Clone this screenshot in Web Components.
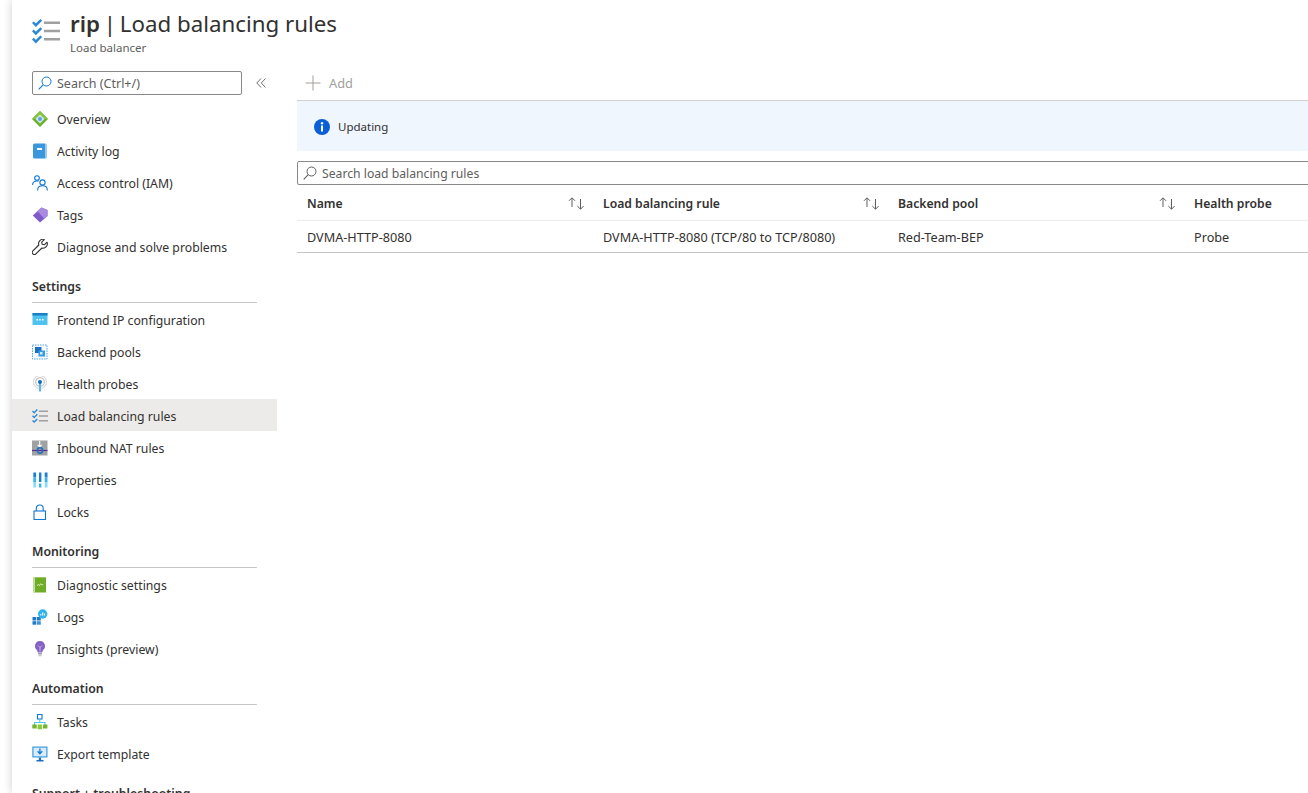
<!DOCTYPE html>
<html>
<head>
<meta charset="utf-8">
<title>rip | Load balancing rules</title>
<style>
  html, body { margin: 0; padding: 0; height: 100%; background: #fff; overflow: hidden; }
  body { font-family: "Noto Sans", "Open Sans", sans-serif; color: #323130; }
</style>
</head>
<body>
<az-blade>
  <az-header slot="header" name="rip" title-text="Load balancing rules" subtitle="Load balancer"></az-header>
  <az-menu slot="menu">
    <az-menu-item icon="overview">Overview</az-menu-item>
    <az-menu-item icon="activity">Activity log</az-menu-item>
    <az-menu-item icon="iam">Access control (IAM)</az-menu-item>
    <az-menu-item icon="tags">Tags</az-menu-item>
    <az-menu-item icon="wrench">Diagnose and solve problems</az-menu-item>
    <az-menu-section>Settings</az-menu-section>
    <az-menu-item icon="frontend">Frontend IP configuration</az-menu-item>
    <az-menu-item icon="backend">Backend pools</az-menu-item>
    <az-menu-item icon="probe">Health probes</az-menu-item>
    <az-menu-item icon="rules" selected>Load balancing rules</az-menu-item>
    <az-menu-item icon="nat">Inbound NAT rules</az-menu-item>
    <az-menu-item icon="props">Properties</az-menu-item>
    <az-menu-item icon="lock">Locks</az-menu-item>
    <az-menu-section>Monitoring</az-menu-section>
    <az-menu-item icon="diag">Diagnostic settings</az-menu-item>
    <az-menu-item icon="logs">Logs</az-menu-item>
    <az-menu-item icon="bulb">Insights (preview)</az-menu-item>
    <az-menu-section>Automation</az-menu-section>
    <az-menu-item icon="tasks">Tasks</az-menu-item>
    <az-menu-item icon="export">Export template</az-menu-item>
    <az-menu-section>Support + troubleshooting</az-menu-section>
  </az-menu>
  <az-content slot="content"></az-content>
</az-blade>

<script>
const ICONS = {
  overview: `<path d="M8 0l8 8-8 8-8-8z" fill="#6bb024"/><path d="M8 0l8 8H0z" fill="#86c43a"/><path d="M8 3.500l4.500 4.500L8 12.500 3.500 8z" fill="#cfe6f5"/><circle cx="8" cy="8" r="2" fill="#5ea0e6"/>`,
  activity: `<rect x="1" y="0.500" width="13.500" height="15" rx="1.500" fill="#3a96dd"/><rect x="13" y="1" width="1.500" height="14" fill="#9cc9ec"/><rect x="5" y="5" width="5" height="2" fill="#fff"/>`,
  iam: `<g fill="none" stroke="#0f78d4" stroke-width="1.100"><circle cx="5" cy="3" r="2.300"/><path d="M.6 10c0-2.500 1.800-4 4.200-4 .6 0 1.200.1 1.700.3"/><circle cx="10.500" cy="7.500" r="2.600"/><path d="M5.600 15.500c0-3 2-4.700 4.900-4.700s4.900 1.700 4.900 4.700"/></g>`,
  tags: `<path d="M9.500.5l6 2.500v6L8 15.500.8 8.500z" fill="#7f5bc9"/><path d="M9.500.5l6 2.500v6l-3.200 2.800-7-7.700z" fill="#a98ae0"/>`,
  wrench: `<path d="M15 3.200l-2.600 2.600-2.200-.5-.5-2.200L12.300.6a4.300 4.300 0 0 0-5.500 5.400L.9 11.900a2.100 2.100 0 0 0 3 3L9.900 9a4.300 4.300 0 0 0 5.100-5.800z" fill="none" stroke="#323130" stroke-width="1.100" stroke-linejoin="round"/>`,
  frontend: `<rect x="0.500" y="1" width="15" height="12" fill="#4fc3ef"/><rect x="0.500" y="1" width="15" height="2.500" fill="#1b7fc4"/><rect x="4.500" y="7" width="1.500" height="1.500" fill="#fff"/><rect x="7.200" y="7" width="1.500" height="1.500" fill="#fff"/><rect x="10" y="7" width="1.500" height="1.500" fill="#fff"/>`,
  backend: `<rect x="0.500" y="1" width="14.500" height="14" fill="#f4f9fd" stroke="#5aa7e0" stroke-dasharray="1.500 1"/><rect x="3" y="3" width="6.500" height="6" fill="#1b6fc2"/><rect x="6.500" y="6.500" width="6.500" height="6" fill="#3a9ce0"/><rect x="8" y="8" width="2.500" height="2.500" fill="#d7ecfa"/>`,
  probe: `<circle cx="8" cy="6" r="6.500" fill="none" stroke="#d8d8d8" stroke-width="1.100"/><circle cx="8" cy="6" r="4.300" fill="none" stroke="#bdbdbd" stroke-width="1.100"/><rect x="7" y="6" width="2" height="9.500" fill="#5cb8ea"/><circle cx="8" cy="6" r="2" fill="#0f6cbd"/>`,
  rules: `<g fill="none"><path d="M.5 3l1.700 1.700 3.100-3.100M.5 7.700l1.700 1.700 3.100-3.100M.5 12.400l1.700 1.700 3.100-3.100" stroke="#2b88d8" stroke-width="1.400"/><path d="M6.800 3.300H16M6.800 8H16M6.800 12.700H16" stroke="#a0a0a0" stroke-width="1.400"/></g>`,
  nat: `<rect x="0" y="0.500" width="15.500" height="15" fill="#a0a1a3"/><path d="M7.700 1v6M5.700 4.800l2 2.200 2-2.200" fill="none" stroke="#fff" stroke-width="1.100"/><path d="M0 10.500h15.500" stroke="#5c2d91" stroke-width="1.200"/><circle cx="8" cy="10.500" r="2.700" fill="none" stroke="#1b6fc2" stroke-width="1.500"/>`,
  props: `<rect x="1.300" y="0.500" width="2.800" height="5" fill="#1d7fcc"/><rect x="1.300" y="5.500" width="2.800" height="5" fill="#39b4ec"/><rect x="1.300" y="10.500" width="2.800" height="5" fill="#8adcf9"/><rect x="7" y="0.500" width="2.400" height="9.500" fill="#1d7fcc"/><rect x="7" y="11.500" width="2.400" height="4" fill="#39b4ec"/><rect x="12.700" y="0.500" width="2.800" height="5" fill="#1d7fcc"/><rect x="12.700" y="5.500" width="2.800" height="5" fill="#39b4ec"/><rect x="12.700" y="10.500" width="2.800" height="5" fill="#8adcf9"/>`,
  lock: `<rect x="2" y="7" width="11.500" height="8.500" fill="none" stroke="#0f78d4" stroke-width="1.100"/><path d="M4.300 7V4.500a3.400 3.400 0 0 1 6.900 0V7" fill="none" stroke="#0f78d4" stroke-width="1.100"/>`,
  diag: `<rect x="1.500" y="0.300" width="12.500" height="15.200" fill="#70ad27"/><rect x="1.500" y="0.300" width="1.500" height="15.200" fill="#c3dfa0"/><path d="M5 8.500l1.500-1 1 1.200 1.200-2 1 1h1.500" fill="none" stroke="#e5f2d2" stroke-width=".9"/>`,
  logs: `<rect x="0.500" y="8" width="3.800" height="3.500" fill="#1f78c8"/><rect x="5" y="8" width="3.800" height="3.500" fill="#1f78c8"/><rect x="0.500" y="12.200" width="3.800" height="3.500" fill="#1f78c8"/><rect x="5" y="12.200" width="3.800" height="3.500" fill="#3a96dd"/><circle cx="10.700" cy="5" r="4.700" fill="#2fb4ec"/><path d="M8.800 6.500V5M10.700 6.500V3.500M12.500 6.500V4.500" stroke="#fff" stroke-width="1.100"/>`,
  bulb: `<path d="M8 0a5 5 0 0 1 3 9l-.8 2.500H5.800L5 9a5 5 0 0 1 3-9z" fill="#8661c5"/><path d="M6 4.500l2 2 2-2M8 6.500v4" fill="none" stroke="#d9c9f2" stroke-width=".8"/><rect x="6" y="12" width="4" height="1.500" fill="#a0a1a3"/><rect x="6.500" y="14" width="3" height="1.300" fill="#c4c4c4"/>`,
  tasks: `<rect x="5.500" y="0.500" width="4.500" height="4.500" fill="#fff" stroke="#0f78d4" stroke-width="1.100"/><path d="M7.800 5v4M2.500 11V8.500h10.500V11" fill="none" stroke="#50c8ee" stroke-width="1.100"/><rect x="0.300" y="10.500" width="4.400" height="4" fill="#72b62d"/><rect x="5.600" y="10.500" width="4.400" height="4.800" fill="#8ccb3c"/><rect x="11" y="10.500" width="4.400" height="4" fill="#72b62d"/>`,
  export: `<rect x="0.300" y="0.500" width="15.200" height="11" fill="#3a9ce0"/><rect x="1.500" y="1.700" width="12.800" height="8.600" fill="#d6ecfa"/><path d="M7.900 2.500v5M5.600 5.300l2.300 2.400 2.300-2.400" fill="none" stroke="#1f78c8" stroke-width="1.300"/><rect x="6.800" y="11.500" width="2.300" height="2.500" fill="#1b6fc2"/><rect x="4.500" y="14" width="7" height="1.500" fill="#1b6fc2"/>`
};

class AzIcon extends HTMLElement {
  connectedCallback() {
    const size = this.getAttribute("size") || 16;
    const root = this.shadowRoot || this.attachShadow({ mode: "open" });
    root.innerHTML = `
      <style>
        :host { display: block; width: ${size}px; height: ${size}px; flex: none; }
        svg { display: block; width: 100%; height: 100%; }
      </style>
      <svg viewBox="0 0 16 16">${ICONS[this.getAttribute("name")] || ""}</svg>`;
  }
}
customElements.define("az-icon", AzIcon);

class AzBlade extends HTMLElement {
  constructor() {
    super();
    this.attachShadow({ mode: "open" });
    this.shadowRoot.innerHTML = `
      <style>
        :host { display: block; height: 793px; width: 1296px; margin-left: 12px; overflow: visible;
                box-shadow: 0 0 9px rgba(0,0,0,.2); background: #fff; }
        .clip { height: 793px; width: 1296px; overflow: hidden; display: flex; flex-direction: column; }
        .body { display: flex; flex: 1; min-height: 0; }
        .left { width: 265px; flex: none; overflow: hidden; }
        .right { flex: 1; min-width: 0; padding-left: 20px; overflow: hidden; }
      </style>
      <div class="clip">
        <slot name="header"></slot>
        <div class="body">
          <div class="left"><slot name="menu"></slot></div>
          <div class="right"><slot name="content"></slot></div>
        </div>
      </div>`;
  }
}
customElements.define("az-blade", AzBlade);

class AzHeader extends HTMLElement {
  connectedCallback() {
    const root = this.attachShadow({ mode: "open" });
    root.innerHTML = `
      <style>
        :host { display: flex; height: 71px; box-sizing: border-box; padding: 7px 0 0 20px; gap: 10px; }
        az-icon { margin-top: 10px; }
        h1 { margin: 0; font-size: 22.300px; line-height: 33px; font-weight: 400; color: #323130; white-space: nowrap; }
        b { font-weight: 600; }
        .sep { word-spacing: -2px; }
        p { margin: 0; font-size: 11.500px; line-height: 16px; color: #605e5c; }
      </style>
      <az-icon name="rules" size="28"></az-icon>
      <div>
        <h1><b>${this.getAttribute("name")}</b><span class="sep"> | </span>${this.getAttribute("title-text")}</h1>
        <p>${this.getAttribute("subtitle")}</p>
      </div>`;
  }
}
customElements.define("az-header", AzHeader);

class AzSearch extends HTMLElement {
  connectedCallback() {
    const root = this.attachShadow({ mode: "open" });
    const color = this.getAttribute("icon-color") || "#0f78d4";
    root.innerHTML = `
      <style>
        :host { display: flex; align-items: center; box-sizing: border-box; height: 24px; border: 1px solid #8a8886;
                border-radius: 2px; padding-left: 5px; gap: 5px; font-size: var(--search-size, 12.500px); color: #605e5c; }
        svg { width: 14px; height: 14px; flex: none; }
        span { white-space: nowrap; }
      </style>
      <svg viewBox="0 0 14 14"><circle cx="8.500" cy="5.500" r="4.500" fill="none" stroke="${color}"/><path d="M5.300 8.700L.7 13.300" stroke="${color}" stroke-width="1.100"/></svg>
      <span>${this.getAttribute("placeholder")}</span>`;
  }
}
customElements.define("az-search", AzSearch);

class AzMenu extends HTMLElement {
  constructor() {
    super();
    this.attachShadow({ mode: "open" });
    this.shadowRoot.innerHTML = `
      <style>
        :host { display: block; }
        .top { display: flex; align-items: flex-start; padding-left: 20px; height: 31px; }
        az-search { width: 210px; }
        .collapse { margin: 7px 0 0 14px; width: 10px; height: 10px; }
      </style>
      <div class="top">
        <az-search placeholder="Search (Ctrl+/)"></az-search>
        <svg class="collapse" viewBox="0 0 10 10"><path d="M5 .5L.8 5 5 9.500M9.500 .5L5.300 5l4.200 4.500" fill="none" stroke="#605e5c" stroke-width=".9"/></svg>
      </div>
      <slot></slot>`;
  }
}
customElements.define("az-menu", AzMenu);

class AzMenuItem extends HTMLElement {
  connectedCallback() {
    const root = this.attachShadow({ mode: "open" });
    root.innerHTML = `
      <style>
        :host { display: flex; align-items: center; box-sizing: border-box; height: 32px; padding: 2px 0 0 20px; gap: 9px;
                font-size: 12.250px; color: #323130; white-space: nowrap; }
        :host([selected]) { background: #edebe9; }
      </style>
      <az-icon name="${this.getAttribute("icon")}"></az-icon>
      <slot></slot>`;
  }
}
customElements.define("az-menu-item", AzMenuItem);

class AzMenuSection extends HTMLElement {
  constructor() {
    super();
    this.attachShadow({ mode: "open" });
    this.shadowRoot.innerHTML = `
      <style>
        :host { display: block; box-sizing: border-box; margin: 0 20px; padding: 17px 0 7px; height: 41px;
                border-bottom: 1px solid #c8c6c4; font-size: 12.300px; line-height: 16px; font-weight: 600;
                color: #323130; white-space: nowrap; }
      </style>
      <slot></slot>`;
  }
}
customElements.define("az-menu-section", AzMenuSection);

class AzSortIcon extends HTMLElement {
  constructor() {
    super();
    this.attachShadow({ mode: "open" });
    this.shadowRoot.innerHTML = `
      <style>:host { display: block; width: 17px; height: 14px; flex: none; } svg { display: block; }</style>
      <svg width="17" height="14" viewBox="0 0 17 14"><path d="M4 11V2M1 4.800L4 1.800l3 3" fill="none" stroke="#605e5c"/><path d="M12.500 3v10M9.300 10l3.200 3.200 3.200-3.200" fill="none" stroke="#605e5c"/></svg>`;
  }
}
customElements.define("az-sort-icon", AzSortIcon);

class AzTable extends HTMLElement {
  set data(d) {
    this._d = d;
    this.render();
  }
  render() {
    const { columns, rows } = this._d;
    const root = this.shadowRoot || this.attachShadow({ mode: "open" });
    root.innerHTML = `
      <style>
        :host { display: block; color: #323130; }
        .row { display: grid; grid-template-columns: 296px 295px 296px 200px; white-space: nowrap; }
        .head { height: 36px; padding-top: 1px; border-bottom: 1px solid #edebe9; box-sizing: border-box; font-weight: 600; font-size: 12.200px; }
        .body { height: 32px; border-bottom: 1px solid #c8c6c4; box-sizing: border-box; font-size: 12.660px; }
        .cell { display: flex; align-items: center; justify-content: space-between; padding: 0 8px 0 10px; overflow: hidden; }
      </style>
      <div class="row head">${columns.map((c, i) =>
        `<div class="cell"><span>${c}</span>${i < columns.length - 1 ? "<az-sort-icon></az-sort-icon>" : ""}</div>`).join("")}</div>
      ${rows.map((r) => `<div class="row body">${r.map((v) => `<div class="cell"><span>${v}</span></div>`).join("")}</div>`).join("")}`;
  }
}
customElements.define("az-table", AzTable);

class AzContent extends HTMLElement {
  constructor() {
    super();
    this.attachShadow({ mode: "open" });
    this.shadowRoot.innerHTML = `
      <style>
        :host { display: block; width: 1011px; }
        .toolbar { display: flex; align-items: flex-start; height: 25px; gap: 8px; padding: 4px 0 0 8px;
                   border-bottom: 1px solid #d2d0ce; font-size: 12.800px; line-height: 16px; color: #a19f9d; }
        .banner { display: flex; align-items: center; height: 50px; box-sizing: border-box; padding: 1px 0 0 17px;
                  background: #eff6fe; gap: 8px; font-size: 11.500px; color: #323130; }
        az-search { margin-top: 10px; height: 24px; width: 1100px; --search-size: 12.200px; }
      </style>
      <div class="toolbar">
        <svg width="16" height="16" viewBox="0 0 16 16"><path d="M8 .5v15M.5 8h15" stroke="#a19f9d" fill="none"/></svg>
        <span>Add</span>
      </div>
      <div class="banner">
        <svg width="16" height="16" viewBox="0 0 16 16"><circle cx="8" cy="8" r="8" fill="#0b5fd6"/><rect x="7" y="6.500" width="2" height="6" fill="#fff"/><circle cx="8" cy="4.300" r="1.200" fill="#fff"/></svg>
        <span>Updating</span>
      </div>
      <az-search placeholder="Search load balancing rules" icon-color="#605e5c"></az-search>
      <az-table></az-table>`;
    this.shadowRoot.querySelector("az-table").data = {
      columns: ["Name", "Load balancing rule", "Backend pool", "Health probe"],
      rows: [["DVMA-HTTP-8080", "DVMA-HTTP-8080 (TCP/80 to TCP/8080)", "Red-Team-BEP", "Probe"]]
    };
  }
}
customElements.define("az-content", AzContent);
</script>
</body>
</html>
